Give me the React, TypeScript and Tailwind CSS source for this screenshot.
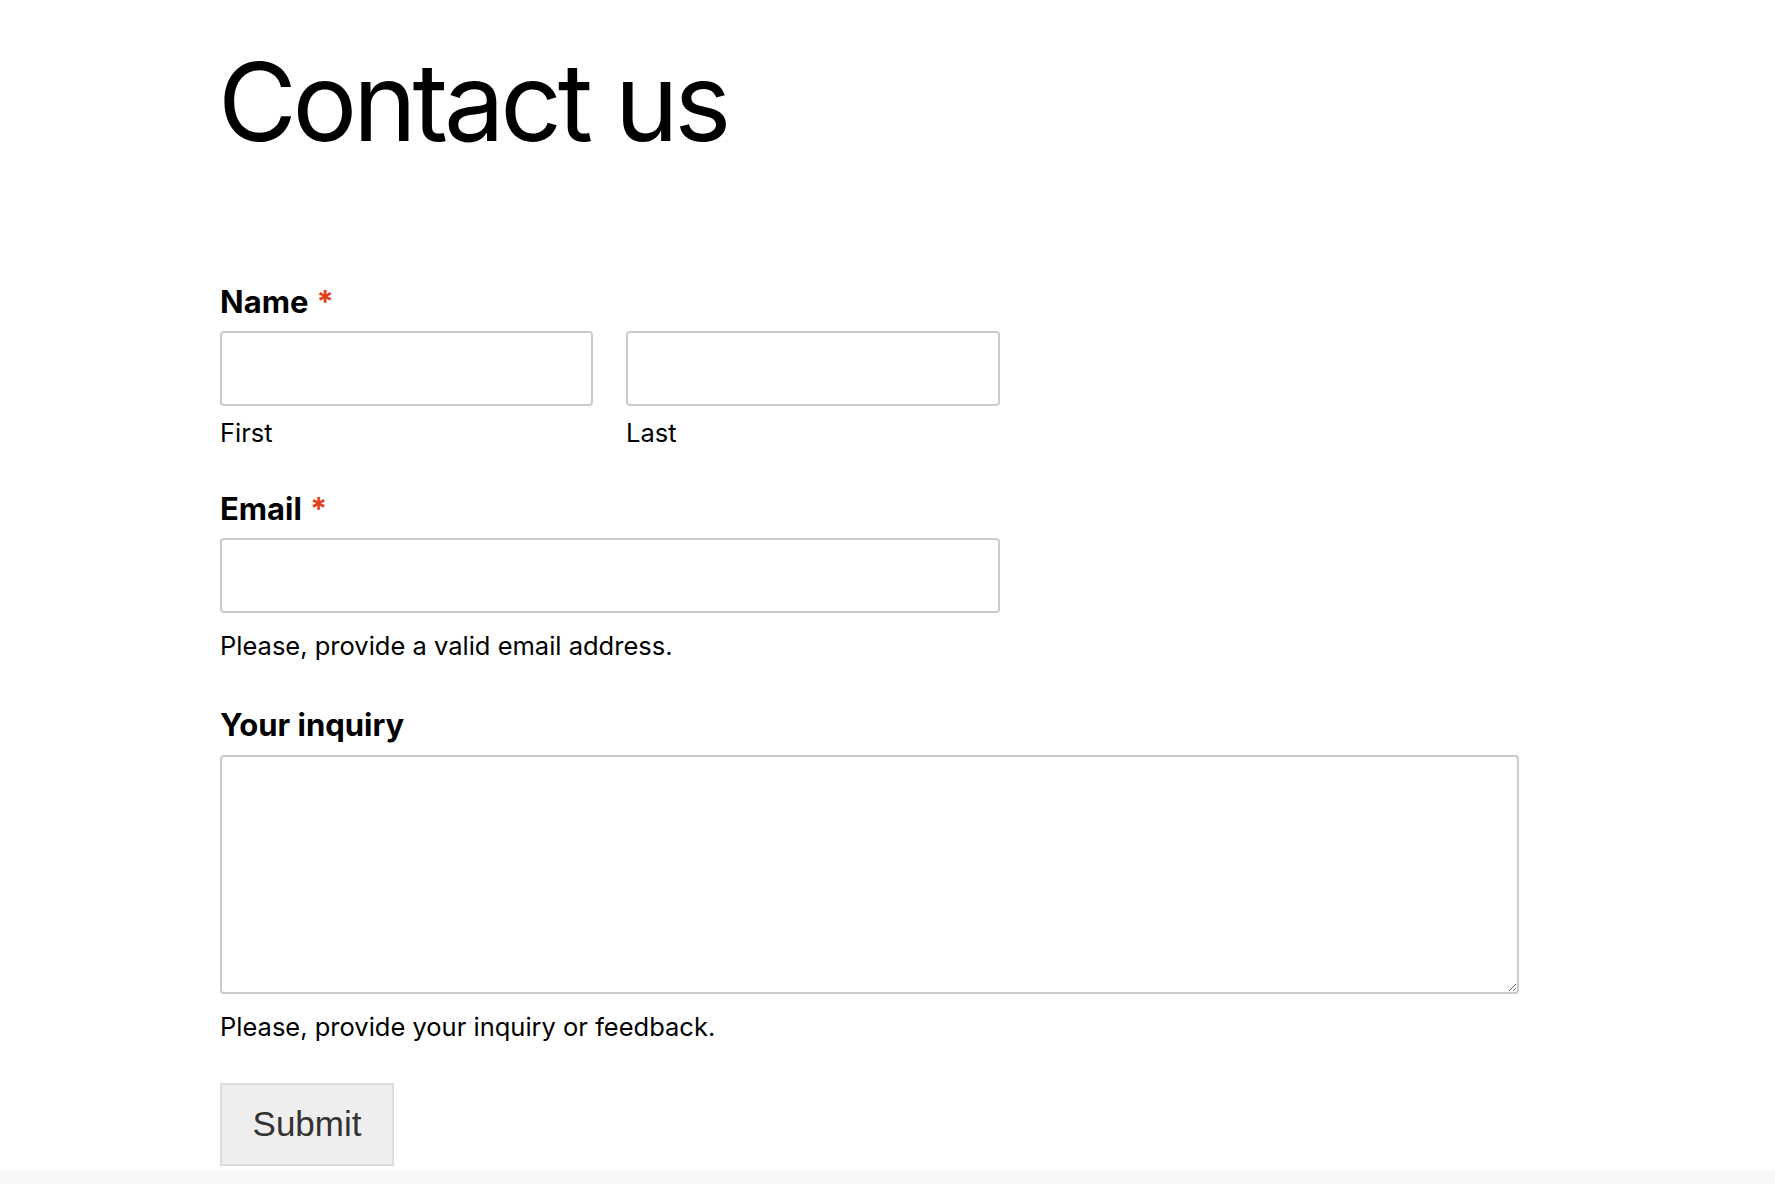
import React from "react";

const Required = () => <span className="ml-[8px] text-[#e2401c]">*</span>;

export default function App() {
  return (
    <div className="min-h-screen bg-white flex flex-col" style={{ fontFamily: "Inter, 'Noto Sans', sans-serif" }}>
      <main className="flex-1 pl-[220px] pb-[3px]">
        <h1 className="ml-[-2px] mt-[48px] text-[108px] leading-[108px] font-normal tracking-[-0.04em] text-black">
          Contact us
        </h1>

        <form className="mt-[128px] w-[1299px] flex flex-col text-black" onSubmit={(e) => e.preventDefault()}>
          {/* Name */}
          <label className="text-[31px] leading-[36px] font-bold">
            Name
            <Required />
          </label>
          <div className="mt-[11px] flex gap-[33px]">
            <div className="flex flex-col w-[373px]">
              <input type="text" className="h-[75px] w-full rounded-[4px] border-2 border-[#cbcbcb] bg-white px-3 outline-none" />
              <span className="mt-[11px] text-[25.5px] leading-[32px]">First</span>
            </div>
            <div className="flex flex-col w-[374px]">
              <input type="text" className="h-[75px] w-full rounded-[4px] border-2 border-[#cbcbcb] bg-white px-3 outline-none" />
              <span className="mt-[11px] text-[25.5px] leading-[32px]">Last</span>
            </div>
          </div>

          {/* Email */}
          <label className="mt-[42px] text-[31px] leading-[36px] font-bold">
            Email
            <Required />
          </label>
          <input type="email" className="mt-[11px] h-[75px] w-[780px] rounded-[4px] border-2 border-[#cbcbcb] bg-white px-3 outline-none" />
          <p className="mt-[17px] text-[25.5px] leading-[32px]">Please, provide a valid email address.</p>

          {/* Inquiry */}
          <label className="mt-[45px] text-[31px] leading-[36px] font-bold">Your inquiry</label>
          <textarea className="mt-[12px] h-[239px] w-full rounded-[4px] border-2 border-[#cbcbcb] bg-white p-3 outline-none" />
          <p className="mt-[17px] text-[25.5px] leading-[32px]">Please, provide your inquiry or feedback.</p>

          <div className="mt-[40px]">
            <button
              type="submit"
              className="h-[83px] w-[174px] border-2 border-[#dcdcdc] bg-[#eeeeee] text-[35px] text-[#333333]"
              style={{ fontFamily: "'Liberation Sans', Arial, sans-serif" }}
            >
              Submit
            </button>
          </div>
        </form>
      </main>
      <footer className="h-[14px] bg-[#f8f8f8]" />
    </div>
  );
}
